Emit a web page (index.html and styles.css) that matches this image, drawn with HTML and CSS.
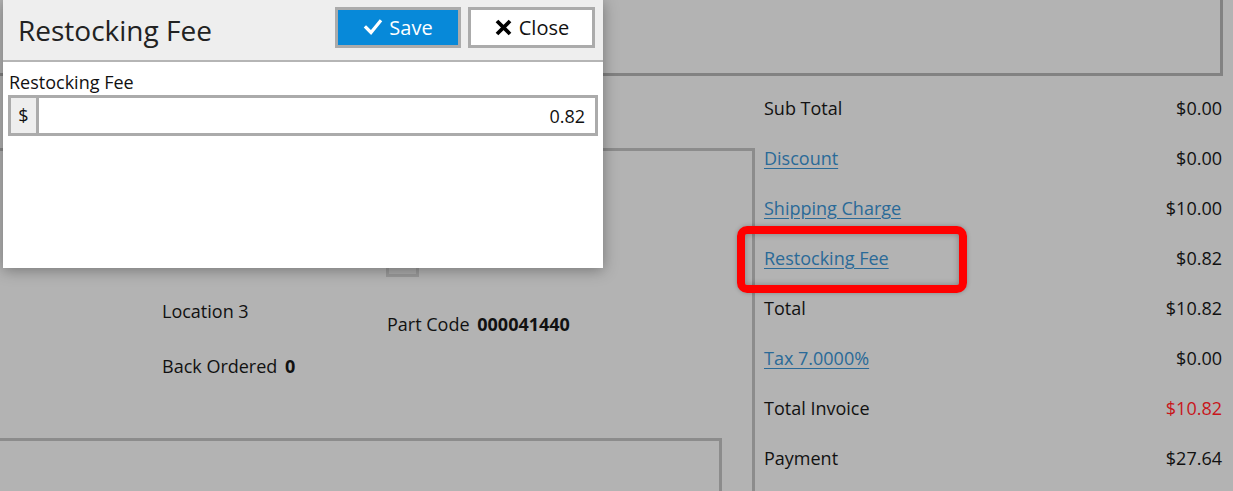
FILE: index.html
```html
<!DOCTYPE html>
<html lang="en">
<head>
<meta charset="UTF-8">
<title>Restocking Fee</title>
<link rel="stylesheet" href="styles.css">
</head>
<body>
<div class="page">
    <div class="top-box"></div>

    <div class="main">
        <div class="left">
            <div class="thumb"></div>
            <div class="details">
                <div class="col">
                    <div class="item">Location 3</div>
                    <div class="item back">Back Ordered <b>0</b></div>
                </div>
                <div class="col col-2">
                    <div class="item">Part Code <b>000041440</b></div>
                </div>
            </div>
            <div class="bottom-box"></div>
        </div>

        <div class="totals">
            <div class="row"><span>Sub Total</span><span>$0.00</span></div>
            <div class="row"><a href="#">Discount</a><span>$0.00</span></div>
            <div class="row"><a href="#">Shipping Charge</a><span>$10.00</span></div>
            <div class="row"><a href="#">Restocking Fee</a><span>$0.82</span></div>
            <div class="row"><span>Total</span><span>$10.82</span></div>
            <div class="row"><a href="#">Tax 7.0000%</a><span>$0.00</span></div>
            <div class="row"><span>Total Invoice</span><span class="red">$10.82</span></div>
            <div class="row"><span>Payment</span><span>$27.64</span></div>
        </div>
    </div>

    <div class="highlight"></div>

    <div class="modal">
        <div class="modal-header">
            <h1>Restocking Fee</h1>
            <div class="modal-buttons">
                <button class="btn btn-save">
                    <svg width="20" height="20" viewBox="0 0 20 20"><path d="M3 10.5 L8 15.5 L17 4.5" fill="none" stroke="#fff" stroke-width="3.2" stroke-linecap="square"/></svg>
                    Save
                </button>
                <button class="btn btn-close">
                    <svg width="19" height="19" viewBox="0 0 19 19"><path d="M3 3 L16 16 M16 3 L3 16" fill="none" stroke="#000" stroke-width="3.8"/></svg>
                    Close
                </button>
            </div>
        </div>
        <div class="modal-body">
            <label class="field-label">Restocking Fee</label>
            <div class="input-group">
                <span class="addon">$</span>
                <input class="amount" type="text" value="0.82">
            </div>
        </div>
    </div>
</div>
</body>
</html>
```

FILE: styles.css
```css
body {
    margin: 0;
    font-family: "Open Sans", "Noto Sans", sans-serif;
    font-size: 18px;
    color: #111;
    background-color: #b3b3b3;
}
.page {
    position: relative;
    width: 1233px;
    height: 491px;
    overflow: hidden;
}
.top-box {
    width: 1220px;
    height: 73px;
    border-right: 3px solid #828282;
    border-bottom: 3px solid #828282;
}
.main {
    display: flex;
}
.left {
    width: 752px;
    margin-top: 72px;
    border-top: 3px solid #8c8c8c;
    border-right: 3px solid #8c8c8c;
    height: 400px;
}
.thumb {
    width: 27px;
    height: 25px;
    margin: 95px 0 0 386px;
    border: 3px solid #9a9a9a;
    background-color: #ababab;
}
.details {
    display: flex;
    padding-left: 162px;
    margin-top: 20px;
}
.col {
    width: 225px;
    display: flex;
    flex-direction: column;
}
.col-2 {
    padding-top: 13px;
}
.item {
    line-height: 28px;
}
.item b {
    margin-left: 3px;
}
.back {
    margin-top: 27px;
}
.bottom-box {
    width: 719px;
    height: 60px;
    margin-top: 58px;
    border-top: 3px solid #8c8c8c;
    border-right: 3px solid #8c8c8c;
}
.totals {
    flex: 1;
    padding: 7px 11px 0 9px;
}
.row {
    display: flex;
    justify-content: space-between;
    align-items: center;
    height: 50px;
}
.row a {
    color: #2a6a98;
    text-decoration: underline;
    text-underline-offset: 3px;
}
.red {
    color: #c8161b;
}
.highlight {
    position: absolute;
    left: 737px;
    top: 226px;
    width: 214px;
    height: 51px;
    border: 8px solid #ff0000;
    border-radius: 10px;
    box-shadow: inset 0 0 6px rgba(0, 0, 0, 0.3), 0 0 4px rgba(0, 0, 0, 0.25);
}
.modal {
    position: absolute;
    left: 3px;
    top: 0;
    width: 600px;
    height: 268px;
    background-color: #fff;
    box-shadow: 0 2px 14px rgba(0, 0, 0, 0.35);
}
.modal-header {
    display: flex;
    justify-content: space-between;
    align-items: center;
    height: 60px;
    padding: 0 8px 0 15px;
    background-color: #eeeeee;
    border-bottom: 2px solid #b5b5b5;
}
.modal-header h1 {
    margin: 0;
    font-size: 28px;
    font-weight: normal;
    color: #222;
}
.modal-buttons {
    display: flex;
    gap: 7px;
    margin-bottom: 6px;
}
.btn {
    display: flex;
    align-items: center;
    justify-content: center;
    gap: 6px;
    height: 41px;
    border: 3px solid #ababab;
    font-family: inherit;
    font-size: 20px;
    cursor: pointer;
}
.btn-save {
    width: 126px;
    background-color: #0789d9;
    color: #fff;
}
.btn-close {
    width: 127px;
    background-color: #fff;
    color: #111;
}
.modal-body {
    padding: 7px 5px 0 5px;
}
.field-label {
    display: block;
    font-size: 18px;
    line-height: 26px;
    padding-left: 1px;
}
.input-group {
    display: flex;
    height: 35px;
    border: 3px solid #ababab;
}
.addon {
    width: 25px;
    background-color: #eeeeee;
    border-right: 3px solid #ababab;
    text-align: center;
    line-height: 35px;
}
.amount {
    flex: 1;
    border: none;
    outline: none;
    text-align: right;
    font-family: inherit;
    font-size: 18px;
    padding: 0 10px;
    color: #111;
}
```
